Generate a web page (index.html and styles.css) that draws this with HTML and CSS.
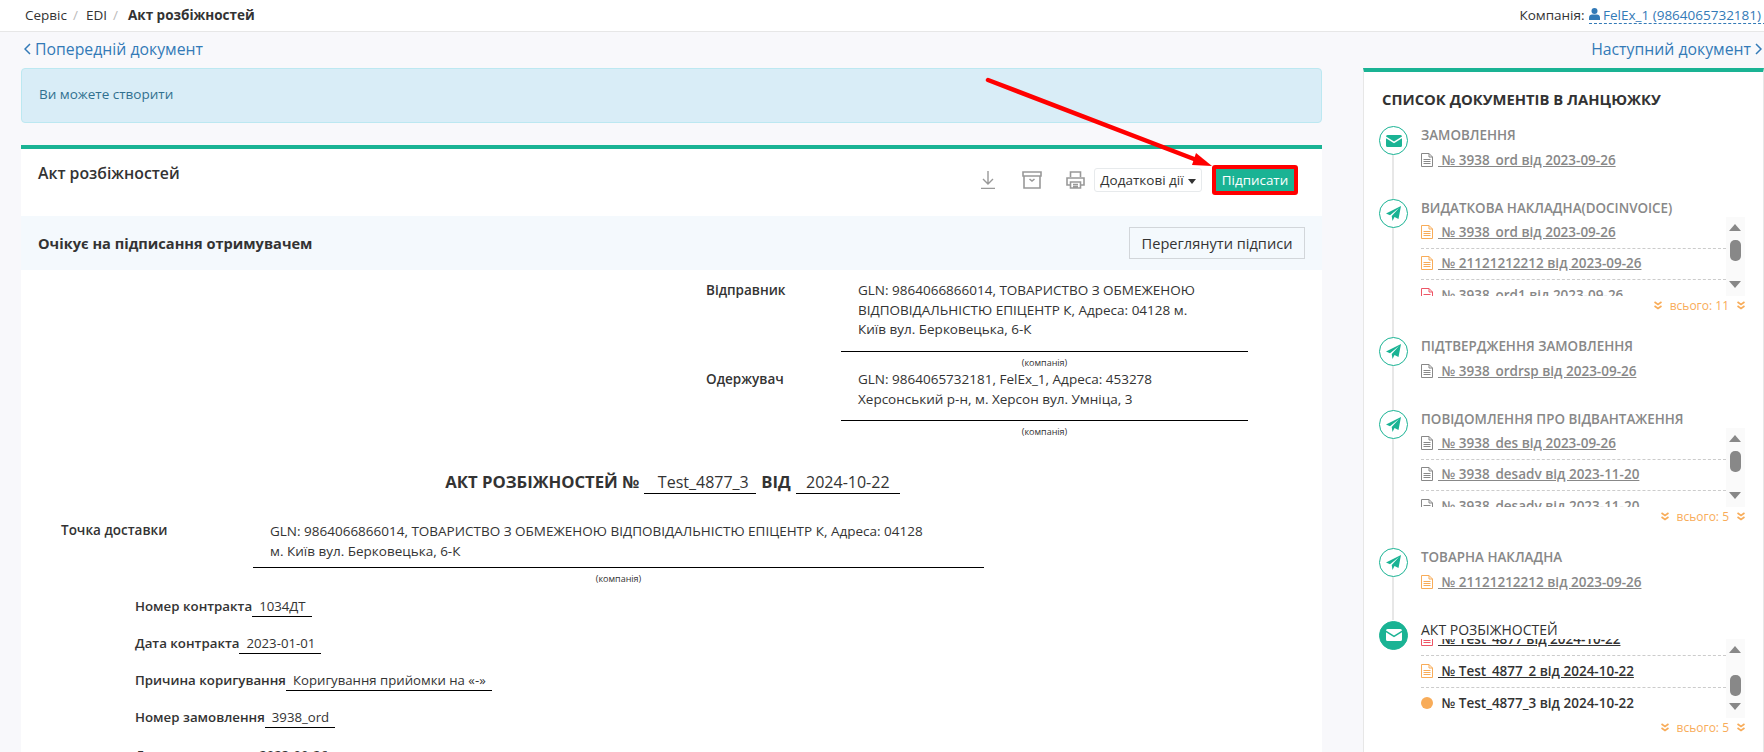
FILE: index.html
```html
<!DOCTYPE html>
<html>

<head>
    <meta charset="utf-8">
    <meta name="viewport" content="width=device-width, initial-scale=1">
    <title>Акт розбіжностей</title>
    <link rel="stylesheet" href="styles.css">
</head>

<body>
    <svg class="defs" width="0" height="0">
        <symbol id="i-doc" viewBox="0 0 12 14">
            <path d="M.5.5h7.5l3.5 3.5v9.5H.5zM8 .5V4h3.5M2.5 6.5h7M2.5 8.5h7M2.5 10.5h7" fill="none" stroke="currentColor"/>
        </symbol>
        <symbol id="i-mail" viewBox="0 0 16 12">
            <path d="M1.5 0h13A1.500 1.500 0 0 1 16 1.500L8 6.500 0 1.500A1.500 1.500 0 0 1 1.500 0zM0 3.300l8 5 8-5V10.500A1.500 1.500 0 0 1 14.500 12h-13A1.500 1.500 0 0 1 0 10.500z" fill="currentColor"/>
        </symbol>
        <symbol id="i-plane" viewBox="0 0 15 15">
            <path d="M15 0 12.500 13 8.500 11 6.500 15 5.700 10 13 2 4 9.300 0 7.500z" fill="currentColor"/>
        </symbol>
        <symbol id="i-dbl" viewBox="0 0 8 9">
            <path d="M.5 1 4 3.500 7.500 1M.5 5 4 7.500 7.500 5" fill="none" stroke="currentColor" stroke-width="1.600"/>
        </symbol>
    </svg>

    <header class="topbar">
        <nav class="crumbs">
            <span>Сервіс</span><i>/</i><span>EDI</span><i>/</i><b>Акт розбіжностей</b>
        </nav>
        <div class="company">
            <span>Компанія:</span>
            <a href="#" class="company-link">
                <svg width="11" height="12" viewBox="0 0 11 12"><circle cx="5.500" cy="3" r="3" fill="currentColor"/><path d="M0 12V9.500C0 7.500 1.500 6.500 3 6.500h5c1.500 0 3 1 3 3V12z" fill="currentColor"/></svg>
                FelEx_1 (9864065732181)<span class="mini-caret"></span>
            </a>
        </div>
    </header>

    <div class="pager">
        <a href="#"><svg width="7" height="12" viewBox="0 0 7 12"><path d="M6 1 1 6l5 5" fill="none" stroke="currentColor" stroke-width="1.500"/></svg>Попередній документ</a>
        <a href="#">Наступний документ<svg width="7" height="12" viewBox="0 0 7 12"><path d="m1 1 5 5-5 5" fill="none" stroke="currentColor" stroke-width="1.500"/></svg></a>
    </div>

    <div class="layout">
        <main class="main-col">
            <div class="alert">Ви можете створити</div>

            <section class="card">
                <div class="card-head">
                    <h2>Акт розбіжностей</h2>
                    <div class="actions">
                        <svg class="act act-down" width="14" height="18" viewBox="0 0 14 18"><path d="M7 0v13M2 8l5 5 5-5M0 17.500h14" fill="none" stroke="currentColor" stroke-width="1.400"/></svg>
                        <svg class="act act-box" width="20" height="18" viewBox="0 0 20 18"><path d="M1 1h18v4H1zM2 5v12h16V5M7.500 8 10 10l2.500-2" fill="none" stroke="currentColor" stroke-width="1.600"/></svg>
                        <svg class="act act-print" width="19" height="18" viewBox="0 0 19 18"><path d="M4.500 6V1h10v5M4.500 14H1V7h17v7h-3.500M4.500 11h10v6h-10zM7 13.500h5M7 15.500h5" fill="none" stroke="currentColor" stroke-width="1.600"/></svg>
                        <button class="btn-more">Додаткові дії<span class="caret"></span></button>
                        <button class="btn-sign">Підписати</button>
                    </div>
                </div>

                <div class="status-bar">
                    <strong>Очікує на підписання отримувачем</strong>
                    <button class="btn-sigs">Переглянути підписи</button>
                </div>

                <div class="doc">
                    <div class="party">
                        <div class="party-label">Відправник</div>
                        <div class="party-value">GLN: 9864066866014, ТОВАРИСТВО З ОБМЕЖЕНОЮ<br>ВІДПОВІДАЛЬНІСТЮ ЕПІЦЕНТР К, Адреса: 04128 м.<br>Київ вул. Берковецька, 6-К</div>
                        <div class="party-note">(компанія)</div>
                    </div>
                    <div class="party">
                        <div class="party-label">Одержувач</div>
                        <div class="party-value">GLN: 9864065732181, FelEx_1, Адреса: 453278<br>Херсонський р-н, м. Херсон вул. Умніца, 3</div>
                        <div class="party-note">(компанія)</div>
                    </div>

                    <h1 class="doc-title">
                        АКТ РОЗБІЖНОСТЕЙ №<span class="title-val num">Test_4877_3</span>ВІД<span class="title-val date">2024-10-22</span>
                    </h1>

                    <div class="party delivery">
                        <div class="party-label">Точка доставки</div>
                        <div class="party-value">GLN: 9864066866014, ТОВАРИСТВО З ОБМЕЖЕНОЮ ВІДПОВІДАЛЬНІСТЮ ЕПІЦЕНТР К, Адреса: 04128<br>м. Київ вул. Берковецька, 6-К</div>
                        <div class="party-note">(компанія)</div>
                    </div>

                    <div class="field"><b>Номер контракта</b><span>1034ДТ</span></div>
                    <div class="field"><b>Дата контракта</b><span>2023-01-01</span></div>
                    <div class="field"><b>Причина коригування</b><span>Коригування прийомки на «-»</span></div>
                    <div class="field"><b>Номер замовлення</b><span>3938_ord</span></div>
                    <div class="field"><b>Дата замовлення</b><span>2023-09-26</span></div>
                </div>
            </section>
        </main>

        <aside class="side">
            <h3>Список документів в ланцюжку</h3>
            <div class="chain">
                <div class="group">
                    <span class="dot"><svg width="16" height="12"><use href="#i-mail"/></svg></span>
                    <div class="group-title">Замовлення</div>
                    <div class="row"><svg class="doc-ico" width="12" height="14"><use href="#i-doc"/></svg><a href="#">&nbsp;№ 3938_ord від 2023-09-26</a></div>
                </div>

                <div class="group long">
                    <span class="dot"><svg width="15" height="15"><use href="#i-plane"/></svg></span>
                    <div class="group-title">Видаткова накладна(DOCINVOICE)</div>
                    <div class="rows">
                        <div class="row"><svg class="doc-ico orange" width="12" height="14"><use href="#i-doc"/></svg><a href="#">&nbsp;№ 3938_ord від 2023-09-26</a></div>
                        <div class="row"><svg class="doc-ico orange" width="12" height="14"><use href="#i-doc"/></svg><a href="#">&nbsp;№ 21121212212 від 2023-09-26</a></div>
                        <div class="row"><svg class="doc-ico red" width="12" height="14"><use href="#i-doc"/></svg><a href="#">&nbsp;№ 3938_ord1 від 2023-09-26</a></div>
                        <div class="scroll"><span class="up"></span><span class="thumb"></span><span class="down"></span></div>
                    </div>
                    <div class="total"><svg width="8" height="9"><use href="#i-dbl"/></svg><span>всього: 11</span><svg width="8" height="9"><use href="#i-dbl"/></svg></div>
                </div>

                <div class="group">
                    <span class="dot"><svg width="15" height="15"><use href="#i-plane"/></svg></span>
                    <div class="group-title">Підтвердження замовлення</div>
                    <div class="row"><svg class="doc-ico" width="12" height="14"><use href="#i-doc"/></svg><a href="#">&nbsp;№ 3938_ordrsp від 2023-09-26</a></div>
                </div>

                <div class="group long">
                    <span class="dot"><svg width="15" height="15"><use href="#i-plane"/></svg></span>
                    <div class="group-title">Повідомлення про відвантаження</div>
                    <div class="rows">
                        <div class="row"><svg class="doc-ico" width="12" height="14"><use href="#i-doc"/></svg><a href="#">&nbsp;№ 3938_des від 2023-09-26</a></div>
                        <div class="row"><svg class="doc-ico" width="12" height="14"><use href="#i-doc"/></svg><a href="#">&nbsp;№ 3938_desadv від 2023-11-20</a></div>
                        <div class="row"><svg class="doc-ico" width="12" height="14"><use href="#i-doc"/></svg><a href="#">&nbsp;№ 3938_desadv від 2023-11-20</a></div>
                        <div class="scroll"><span class="up"></span><span class="thumb"></span><span class="down"></span></div>
                    </div>
                    <div class="total"><svg width="8" height="9"><use href="#i-dbl"/></svg><span>всього: 5</span><svg width="8" height="9"><use href="#i-dbl"/></svg></div>
                </div>

                <div class="group">
                    <span class="dot"><svg width="15" height="15"><use href="#i-plane"/></svg></span>
                    <div class="group-title">Товарна накладна</div>
                    <div class="row"><svg class="doc-ico orange" width="12" height="14"><use href="#i-doc"/></svg><a href="#">&nbsp;№ 21121212212 від 2023-09-26</a></div>
                </div>

                <div class="group long current">
                    <span class="dot"><svg width="16" height="12"><use href="#i-mail"/></svg></span>
                    <div class="group-title">Акт розбіжностей</div>
                    <div class="rows scrolled">
                        <div class="row"><svg class="doc-ico red" width="12" height="14"><use href="#i-doc"/></svg><a href="#">&nbsp;№ Test_4877 від 2024-10-22</a></div>
                        <div class="row"><svg class="doc-ico orange" width="12" height="14"><use href="#i-doc"/></svg><a href="#">&nbsp;№ Test_4877_2 від 2024-10-22</a></div>
                        <div class="row"><span class="now-dot"></span><span class="now">&nbsp;№ Test_4877_3 від 2024-10-22</span></div>
                        <div class="scroll"><span class="up"></span><span class="thumb"></span><span class="down"></span></div>
                    </div>
                    <div class="total"><svg width="8" height="9"><use href="#i-dbl"/></svg><span>всього: 5</span><svg width="8" height="9"><use href="#i-dbl"/></svg></div>
                </div>
            </div>
        </aside>
    </div>

    <svg class="pointer" width="240" height="100" viewBox="0 0 240 100">
        <path d="M10 12 216 91" stroke="#f00" stroke-width="4.500" stroke-linecap="round"/>
        <path d="M234 98 218 85 214 97z" fill="#f00"/>
    </svg>
</body>

</html>
```

FILE: styles.css
```css
* {
    box-sizing: border-box;
}

html,
body {
    height: 100%;
}

body {
    margin: 0;
    height: 100vh;
    overflow: hidden;
    position: relative;
    font-family: "Open Sans", Arial, sans-serif;
    font-size: 13.5px;
    color: #333;
    background-color: #f8f8fb;
}

a {
    color: #337ab7;
    text-decoration: none;
}

.defs {
    position: absolute;
}

/* top bar */
.topbar {
    height: 32px;
    padding: 0 0 1px 25px;
    display: flex;
    justify-content: space-between;
    align-items: center;
    background-color: #fff;
    border-bottom: 1px solid #e7e7e7;
}

.crumbs i {
    font-style: normal;
    color: #bbb;
    margin: 0 8px 0 6px;
}

.crumbs b {
    margin-left: 2px;
    font-weight: 700;
}

.company {
    display: flex;
    gap: 4px;
    margin-right: -7px;
    white-space: nowrap;
}

.company-link {
    display: block;
    height: 18px;
    border-bottom: 1px dashed #337ab7;
}

.mini-caret {
    display: inline-block;
    margin-left: 4px;
    vertical-align: middle;
    border-top: 3px solid #333;
    border-left: 3px solid transparent;
    border-right: 3px solid transparent;
}

/* prev / next */
.pager {
    height: 36px;
    padding: 0 2px 2px 24px;
    display: flex;
    justify-content: space-between;
    align-items: center;
    font-size: 15.8px;
}

.pager a {
    display: flex;
    align-items: center;
    gap: 4px;
}

/* columns */
.layout {
    display: flex;
    align-items: flex-start;
    padding-left: 21px;
}

.main-col {
    width: 1301px;
}

.alert {
    height: 55px;
    padding-left: 17px;
    line-height: 51px;
    color: #31708f;
    background-color: #d9edf7;
    border: 1px solid #bce8f1;
    border-radius: 4px;
}

.card {
    margin-top: 22px;
    background-color: #fff;
    border-top: 4px solid #1ab394;
}

.card-head {
    height: 67px;
    padding: 16px 24px 0 17px;
    display: flex;
    justify-content: space-between;
    align-items: flex-start;
}

.card-head h2 {
    margin: -2px 0 0;
    font-size: 15.8px;
    font-weight: 600;
    line-height: 20px;
}

.actions {
    display: flex;
    align-items: center;
}

.act {
    color: #999;
}

.act-box {
    margin-left: 27px;
}

.act-print {
    margin-left: 24px;
}

.btn-more {
    height: 24px;
    width: 108px;
    margin-left: 9px;
    padding: 0;
    font: 13.5px "Open Sans", Arial, sans-serif;
    color: #333;
    background-color: #fff;
    border: 1px solid #e7eaec;
    border-radius: 3px;
}

.caret {
    display: inline-block;
    margin-left: 4px;
    vertical-align: middle;
    border-top: 5px solid #333;
    border-left: 4.500px solid transparent;
    border-right: 4.500px solid transparent;
}

.btn-sign {
    height: 30px;
    width: 86px;
    margin-left: 10px;
    padding: 0;
    font: 13.4px "Open Sans", Arial, sans-serif;
    color: #fff;
    background-color: #1ab394;
    border: 4px solid #f00;
    border-radius: 3px;
}

.status-bar {
    height: 54px;
    padding: 0 17px;
    display: flex;
    justify-content: space-between;
    align-items: center;
    background-color: #f4f9fd;
}

.status-bar strong {
    font-size: 14.6px;
    font-weight: 700;
}

.btn-sigs {
    height: 32px;
    width: 176px;
    padding: 0;
    font: 14.6px "Open Sans", Arial, sans-serif;
    color: #333;
    background-color: #f4f9fd;
    border: 1px solid #d2d6da;
}

/* document body */
.doc {
    padding-top: 11px;
    height: 600px;
}

.party {
    display: grid;
    grid-template-columns: 135px 407px;
    margin-left: 685px;
}

.party-label {
    font-weight: 600;
    line-height: 19.5px;
}

.party-value {
    padding: 0 0 11px 17px;
    line-height: 19.5px;
    border-bottom: 1px solid #000;
}

.party-note {
    grid-column: 2;
    height: 18.5px;
    padding-top: 5px;
    font-size: 9px;
    line-height: 12px;
    text-align: center;
}

.doc-title {
    margin: 31px 0 0;
    padding-left: 7px;
    display: flex;
    justify-content: center;
    font-size: 16.7px;
    font-weight: 700;
    line-height: 22px;
}

.title-val {
    height: 23px;
    margin: 0 5px;
    font-size: 16px;
    font-weight: 400;
    text-align: center;
    border-bottom: 1px solid #000;
}

.title-val.num {
    width: 112px;
    padding-left: 6px;
}

.title-val.date {
    width: 104px;
}

.party.delivery {
    margin: 27px 0 0 40px;
    grid-template-columns: 192px 731px;
}

.delivery .party-value {
    padding: 0 0 5px 17px;
    line-height: 20.5px;
}

.delivery .party-note {
    height: 29px;
    padding-top: 5px;
}

.field {
    height: 37.3px;
    margin-left: 114px;
    display: flex;
    align-items: flex-start;
    line-height: 19px;
}

.field b {
    font-size: 13.3px;
    font-weight: 600;
}

.field span {
    height: 20px;
    padding: 0 6px 0 7px;
    font-size: 13.2px;
    border-bottom: 1px solid #000;
}

/* document chain */
.side {
    width: 401px;
    height: 700px;
    margin-left: 41px;
    padding: 0 18px;
    background-color: #fff;
    border-top: 4px solid #1ab394;
    border-left: 1px solid #e7e7e7;
    border-right: 1px solid #e7e7e7;
}

.side h3 {
    margin: 0;
    height: 54px;
    padding-top: 17px;
    font-size: 14.8px;
    font-weight: 700;
    line-height: 20px;
    text-transform: uppercase;
}

.chain {
    position: relative;
    padding-left: 39px;
}

.chain::before {
    content: "";
    position: absolute;
    left: 10px;
    top: 10px;
    height: 484px;
    width: 2px;
    background-color: #e7e7e7;
}

.group {
    position: relative;
    height: 50px;
    margin-bottom: 22.5px;
}

.group.long {
    height: 116px;
}

.dot {
    position: absolute;
    left: -42px;
    top: 0;
    width: 29px;
    height: 29px;
    display: flex;
    align-items: center;
    justify-content: center;
    color: #1ab394;
    background-color: #fff;
    border: 1px solid #1ab394;
    border-radius: 50%;
}

.current .dot {
    color: #fff;
    background-color: #1ab394;
}

.group-title {
    height: 18.5px;
    font-size: 13.4px;
    font-weight: 600;
    line-height: 18px;
    color: #888;
    text-transform: uppercase;
}

.current .group-title {
    font-size: 14px;
    font-weight: 400;
    color: #333;
    position: relative;
}

.row {
    height: 31.5px;
    padding-bottom: 1px;
    display: flex;
    align-items: center;
    font-size: 13.5px;
    font-weight: 600;
    color: #888;
}

.rows .row {
    border-bottom: 1px dashed #ccc;
}

.rows .row:nth-child(3) {
    border-bottom: 0;
}

.row a {
    margin-left: 5px;
    color: #888;
    text-decoration: underline;
}

.current .row a,
.now {
    color: #333;
}

.now {
    margin-left: 5px;
}

.doc-ico {
    color: #888;
    flex-shrink: 0;
}

.doc-ico.orange {
    color: #f8ac59;
}

.doc-ico.red {
    color: #ed5565;
}

.now-dot {
    width: 12px;
    height: 12px;
    flex-shrink: 0;
    border-radius: 50%;
    background-color: #f8ac59;
}

.rows {
    position: relative;
    height: 79px;
    padding-right: 19px;
    overflow: hidden;
}

.rows.scrolled .row:first-child {
    margin-top: -14.5px;
}

.scroll {
    position: absolute;
    right: 0;
    top: 0;
    bottom: 0;
    width: 19px;
    background-color: #fafafa;
}

.scroll span {
    position: absolute;
    left: 3px;
}

.scroll .up {
    top: 7px;
    border-bottom: 7px solid #888;
    border-left: 6.500px solid transparent;
    border-right: 6.500px solid transparent;
}

.scroll .down {
    bottom: 8px;
    border-top: 7px solid #888;
    border-left: 6.500px solid transparent;
    border-right: 6.500px solid transparent;
}

.scroll .thumb {
    top: 23px;
    left: 4px;
    width: 11px;
    height: 21px;
    background-color: #888;
    border-radius: 5px;
}

.scrolled .scroll .thumb {
    top: 36px;
}

.total {
    height: 19px;
    display: flex;
    justify-content: flex-end;
    align-items: center;
    gap: 8px;
    font-size: 12px;
    color: #f8ac59;
}

/* annotation drawn on the screenshot */
.pointer {
    position: absolute;
    left: 978px;
    top: 68px;
}
```
